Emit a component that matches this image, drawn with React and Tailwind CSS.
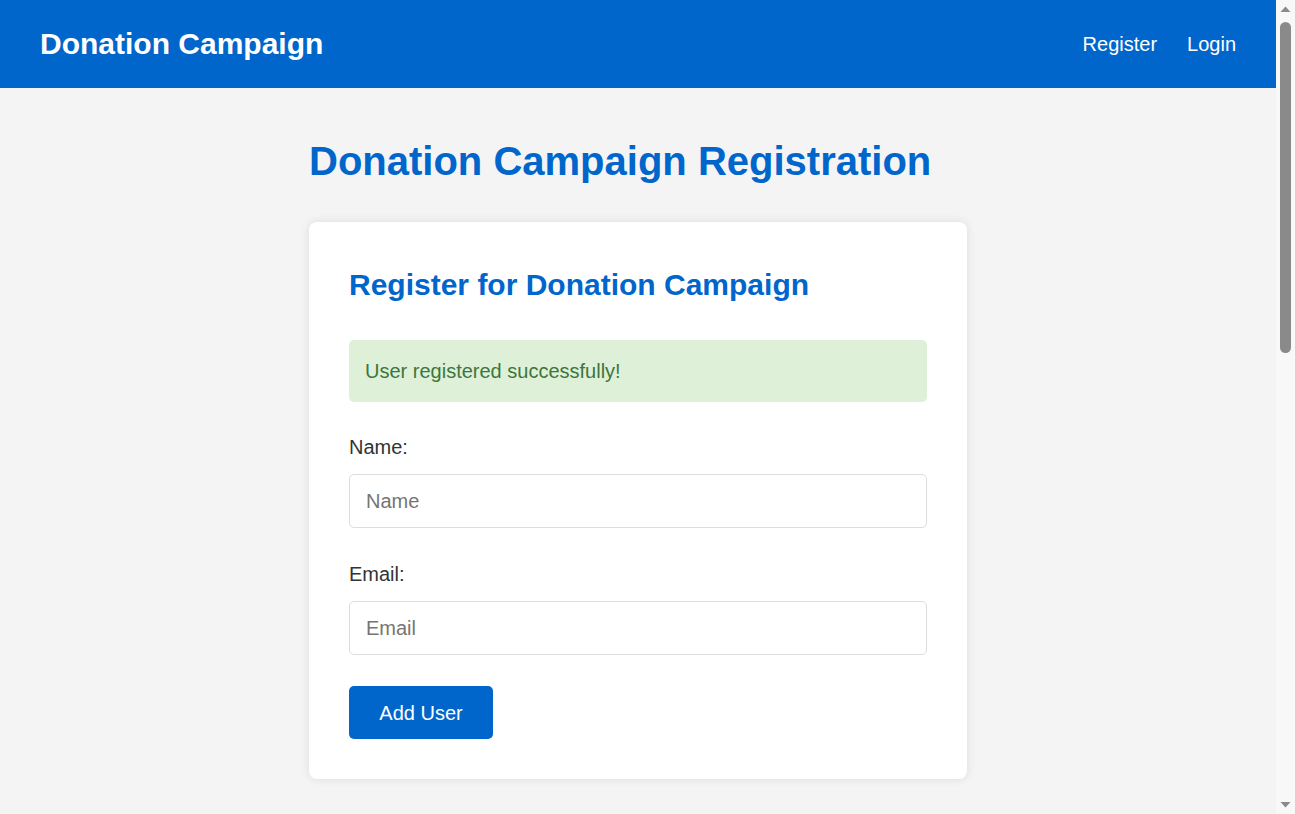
function FakeScrollbar() {
  return (
    <div className="fixed top-0 right-0 w-[19px] h-screen bg-[#f8f8f8] flex flex-col items-center">
      <svg width="19" height="16" viewBox="0 0 19 16" className="shrink-0">
        <polygon points="4.5,12 9.5,6.5 14.5,12" fill="#8a8a8a" />
      </svg>
      <div className="w-[11px] h-[331px] mt-[6px] rounded-[6px] bg-[#8a8a8a]" />
      <div className="flex-1" />
      <svg width="19" height="16" viewBox="0 0 19 16" className="shrink-0">
        <polygon points="4.5,4 14.5,4 9.5,9.5" fill="#8a8a8a" />
      </svg>
    </div>
  );
}

export default function App() {
  return (
    <div
      className="min-h-[1924px] bg-[#f4f4f4] text-[#333] leading-[1.5]"
      style={{ fontFamily: '"Liberation Sans", Arial, sans-serif' }}
    >
      <div className="w-[1276px]">
        <header className="h-[88px] bg-[#0066cc] flex items-center justify-between pl-[40px] pr-[40px]">
          <div className="text-[30px] font-bold text-white leading-[34px]">Donation Campaign</div>
          <nav className="flex items-center gap-[30px] text-[20px] text-white">
            <a href="#" className="text-white">Register</a>
            <a href="#" className="text-white">Login</a>
          </nav>
        </header>
        <main className="w-[658px] mx-auto pt-[43px]">
          <h1 className="text-[40px] font-bold text-[#0066cc] leading-[60px] mb-[31px]">
            Donation Campaign Registration
          </h1>
          <div className="bg-white rounded-[8px] p-[40px] shadow-[0_0_10px_rgba(0,0,0,0.1)]">
            <h2 className="text-[30px] font-bold text-[#0066cc] leading-[45px] mb-[33px]">
              Register for Donation Campaign
            </h2>
            <div className="bg-[#dff0d8] text-[#3c763d] text-[20px] leading-[30px] p-4 rounded-[5px] mb-[30px]">
              User registered successfully!
            </div>
            <div className="mb-[31px]">
              <label className="block text-[20px] leading-[30px] text-[#333] mb-[12px]">Name:</label>
              <input
                type="text"
                placeholder="Name"
                className="block w-full h-[54px] px-4 text-[20px] border border-[#ddd] rounded-[5px] outline-none placeholder:text-[#757575] bg-white"
              />
            </div>
            <div className="mb-[31px]">
              <label className="block text-[20px] leading-[30px] text-[#333] mb-[12px]">Email:</label>
              <input
                type="email"
                placeholder="Email"
                className="block w-full h-[54px] px-4 text-[20px] border border-[#ddd] rounded-[5px] outline-none placeholder:text-[#757575] bg-white"
              />
            </div>
            <button className="bg-[#0066cc] text-white text-[20px] leading-[30px] w-[144px] h-[53px] rounded-[5px]">
              Add User
            </button>
          </div>
        </main>
      </div>
      <FakeScrollbar />
    </div>
  );
}
